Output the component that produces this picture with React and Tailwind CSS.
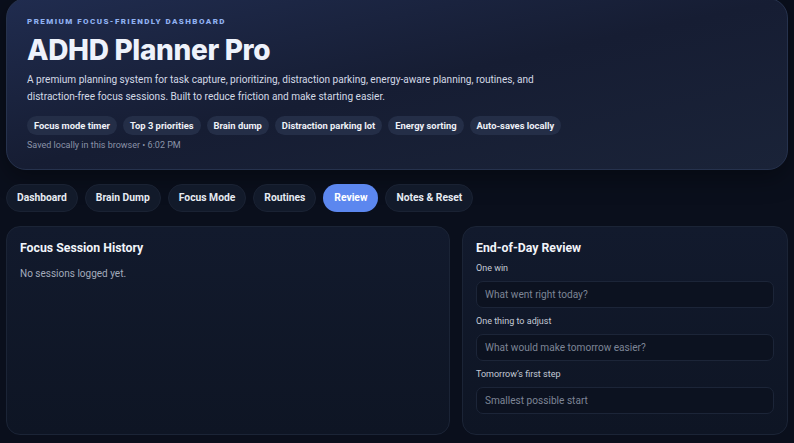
import React from 'react';

const features = [
  'Focus mode timer',
  'Top 3 priorities',
  'Brain dump',
  'Distraction parking lot',
  'Energy sorting',
  'Auto-saves locally',
];

const tabs = ['Dashboard', 'Brain Dump', 'Focus Mode', 'Routines', 'Review', 'Notes & Reset'];

const reviewFields = [
  { label: 'One win', placeholder: 'What went right today?' },
  { label: 'One thing to adjust', placeholder: 'What would make tomorrow easier?' },
  { label: 'Tomorrow\u2019s first step', placeholder: 'Smallest possible start' },
];

export default function App() {
  return (
    <div
      className="min-h-screen bg-[#0a0f1c] px-[6px] pb-2 text-slate-100"
      style={{ fontFamily: 'Roboto, "Noto Sans", sans-serif' }}
    >
      <header className="-mt-[2px] rounded-[20px] border border-[#26324d] bg-gradient-to-br from-[#202c4f] via-[#161d33] to-[#1a2338] px-[20px] pb-[18px] pt-[17px] shadow-[0_8px_24px_rgba(0,0,0,0.35)]">
        <p className="text-[8px] font-black uppercase leading-[12px] tracking-[0.18em] text-[#8fb0f0]">
          Premium focus-friendly dashboard
        </p>
        <h1 className="mt-[6px] font-['Inter'] text-[28px] font-extrabold leading-[32px] tracking-[-0.012em] text-[#eef2fb]">
          ADHD Planner Pro
        </h1>
        <p className="mt-[5px] max-w-[540px] text-[10.1px] leading-[17px] text-[#d3d9e6]">
          A premium planning system for task capture, prioritizing, distraction parking, energy-aware planning, routines, and
          distraction-free focus sessions. Built to reduce friction and make starting easier.
        </p>
        <div className="mt-[11px] flex flex-wrap gap-[6px]">
          {features.map((f) => (
            <span
              key={f}
              className="rounded-full bg-[#242e47] px-[7px] py-[3px] text-[9.4px] font-bold leading-[13px] text-[#eef1f7]"
            >
              {f}
            </span>
          ))}
        </div>
        <p className="mt-[4px] text-[9px] leading-[12px] text-[#8a93a8]">Saved locally in this browser {'\u2022'} 6:02 PM</p>
      </header>

      <nav className="mt-[14px] flex gap-[7px]">
        {tabs.map((t) => (
          <button
            key={t}
            className={
              t === 'Review'
                ? 'rounded-full bg-[#5c87ef] px-[11px] py-[7px] text-[10.3px] font-bold leading-[14px] text-white'
                : 'rounded-full border border-[#1a2233] bg-[#121a2a] px-[10px] py-[6px] text-[10.3px] font-bold leading-[14px] text-[#e6eaf2]'
            }
          >
            {t}
          </button>
        ))}
      </nav>

      <main className="mt-[14px] grid grid-cols-[444px_1fr] gap-[12px]">
        <section className="rounded-[14px] border border-[#1b2436] bg-gradient-to-b from-[#121a2d] to-[#0e1524] px-[13px] pt-[13px]">
          <h2 className="text-[12.3px] font-bold leading-[16px] text-[#f1f4fa]">Focus Session History</h2>
          <p className="mt-[12px] text-[10px] leading-[12px] text-[#a3abbb]">No sessions logged yet.</p>
        </section>

        <section className="rounded-[14px] border border-[#1b2436] bg-gradient-to-b from-[#121a2d] to-[#0e1524] px-[13px] pb-[20px] pt-[13px]">
          <h2 className="text-[12.3px] font-bold leading-[16px] text-[#f1f4fa]">End-of-Day Review</h2>
          <div className="mt-[6px] flex flex-col">
            {reviewFields.map((f, i) => (
              <label key={f.label} className={i === 0 ? 'block' : 'mt-[7px] block'}>
                <span className="block text-[9px] leading-[12px] text-[#c4cad6]">{f.label}</span>
                <input
                  placeholder={f.placeholder}
                  className="mt-[7px] h-[27px] w-full rounded-[7px] border border-[#1c2538] bg-[#0c1220] px-[8px] text-[10.1px] text-slate-200 outline-none placeholder:text-[#7d8596]"
                />
              </label>
            ))}
          </div>
        </section>
      </main>
    </div>
  );
}
